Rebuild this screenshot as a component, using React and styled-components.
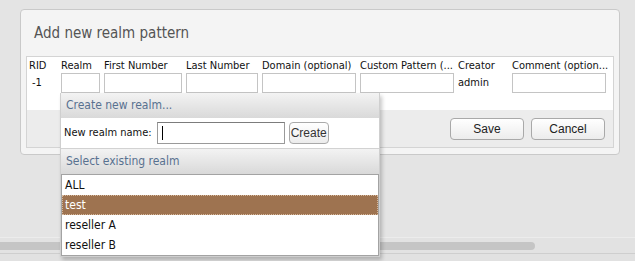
import React from "react";
import styled, { createGlobalStyle } from "styled-components";

const Global = createGlobalStyle`
  html, body {
    margin: 0;
    padding: 0;
    background: #e4e4e4;
    font-family: "DejaVu Sans Condensed", "DejaVu Sans", sans-serif;
    font-stretch: condensed;
    color: #111;
  }
`;

const Page = styled.div`
  height: 261px;
  display: flex;
  flex-direction: column;
  overflow: hidden;
`;

const Panel = styled.section`
  margin: 9px 0 0 20px;
  width: 588px;
  background: #f4f4f4;
  border: 1px solid #c9c9c9;
  border-radius: 4px;
  padding: 0 5px 6px 5px;
`;

const Title = styled.h2`
  margin: 0;
  height: 46px;
  padding-left: 8px;
  display: flex;
  align-items: center;
  font-size: 15px;
  font-weight: normal;
  color: #555;
`;

const Inner = styled.div`
  border: 1px solid #d4d4d4;
  background: #ececec;
`;

const Table = styled.div`
  background: #fff;
  display: grid;
  grid-template-columns: 32px 43px 82px 76px 98px 98px 54px 100px;
  padding: 2px 0 17px 0;
  font-size: 11px;
`;

const Cell = styled.div`
  position: relative;
  padding: 0 2px;
  height: ${(p) => (p.$head ? "14px" : "20px")};
  line-height: ${(p) => (p.$head ? "14px" : "20px")};
  padding-left: ${(p) => (p.$shift ? "5px" : "2px")};
  white-space: nowrap;
  overflow: ${(p) => (p.$open ? "visible" : "hidden")};
`;

const Field = styled.input`
  box-sizing: border-box;
  display: block;
  width: ${(p) => p.$w}px;
  height: 20px;
  border: 1px solid #c4c4c4;
  background: #fff;
  margin: 0;
  padding: 0 2px;
  outline: none;
`;

const Actions = styled.div`
  display: flex;
  justify-content: flex-end;
  gap: 7px;
  padding: 8px 8px 7px 0;
`;

const Button = styled.button`
  box-sizing: border-box;
  width: ${(p) => p.$w || 74}px;
  height: 22px;
  border: 1px solid #a9a9a9;
  border-radius: 4px;
  background: linear-gradient(#ffffff, #ececec);
  font-family: "Liberation Sans", Arial, sans-serif;
  font-size: 12px;
  color: #222;
  padding: 0;
`;

const Popup = styled.div`
  position: absolute;
  top: 20px;
  left: 1px;
  width: 318px;
  z-index: 5;
  background: #fff;
  border: 1px solid #cfcfcf;
  border-top: none;
  box-shadow: 2px 3px 4px rgba(0, 0, 0, 0.22);
  font-family: "DejaVu Sans Condensed", "DejaVu Sans", sans-serif;
`;

const PopHead = styled.div`
  height: ${(p) => p.$h}px;
  line-height: ${(p) => p.$h}px;
  padding-left: 5px;
  background: linear-gradient(#f3f3f3, #d9d9d9);
  border-top: ${(p) => (p.$line ? "1px solid #d2d2d2" : "none")};
  color: #587190;
  font-size: 12px;
`;

const NewRow = styled.div`
  height: 30px;
  display: flex;
  align-items: center;
  padding-left: 3px;
  font-size: 11px;
  color: #111;
`;

const NameBox = styled.div`
  position: relative;
  margin-left: 5px;
`;

const NameInput = styled.input`
  box-sizing: border-box;
  display: block;
  width: 128px;
  height: 22px;
  border: 1px solid #9a9a9a;
  border-top-color: #7c7c7c;
  padding: 0 4px;
  outline: none;
`;

const Caret = styled.span`
  position: absolute;
  left: 5px;
  top: 4px;
  width: 1px;
  height: 14px;
  background: #000;
`;

const CreateButton = styled(Button)`
  margin-left: 4px;
  width: 40px;
  border-radius: 4px;
  color: #333;
`;

const List = styled.ul`
  list-style: none;
  margin: 0;
  padding: 0;
  border: 1px solid #a3a3a3;
  background: #fff;
`;

const Item = styled.li`
  box-sizing: border-box;
  height: 20px;
  line-height: 20px;
  padding-left: 3px;
  font-size: 12px;
  color: ${(p) => (p.$sel ? "#fff" : "#111")};
  background: ${(p) => (p.$sel ? "#9e7350" : "transparent")};
  outline: ${(p) => (p.$sel ? "1px dotted #d6b89c" : "none")};
  outline-offset: -1px;
`;

const Track = styled.div`
  margin-top: auto;
  height: 15px;
  border-top: 1px solid #ececec;
  border-bottom: 1px solid #cecece;
  background: #e2e2e2;
  display: flex;
  align-items: center;
`;

const Thumb = styled.div`
  width: 535px;
  height: 8px;
  border-radius: 0 4px 4px 0;
  background: #c5c5c5;
`;

const Foot = styled.div`
  height: 7px;
  background: #e1e1e1;
`;

const heads = [
  "RID",
  "Realm",
  "First Number",
  "Last Number",
  "Domain (optional)",
  "Custom Pattern (...",
  "Creator",
  "Comment (option...",
];

const realms = ["ALL", "test", "reseller A", "reseller B"];

function RealmPicker() {
  return (
    <Popup>
      <PopHead $h={25}>Create new realm...</PopHead>
      <NewRow>
        New realm name:
        <NameBox>
          <NameInput />
          <Caret />
        </NameBox>
        <CreateButton>Create</CreateButton>
      </NewRow>
      <PopHead $h={25} $line>
        Select existing realm
      </PopHead>
      <List>
        {realms.map((r) => (
          <Item key={r} $sel={r === "test"}>
            {r}
          </Item>
        ))}
      </List>
    </Popup>
  );
}

export default function App() {
  return (
    <Page>
      <Global />
      <Panel>
        <Title>Add new realm pattern</Title>
        <Inner>
          <Table>
            {heads.map((h) => (
              <Cell key={h} $head>
                {h}
              </Cell>
            ))}
            <Cell $shift>-1</Cell>
            <Cell $open>
              <Field $w={39} />
              <RealmPicker />
            </Cell>
            <Cell>
              <Field $w={78} />
            </Cell>
            <Cell>
              <Field $w={72} />
            </Cell>
            <Cell>
              <Field $w={94} />
            </Cell>
            <Cell>
              <Field $w={94} />
            </Cell>
            <Cell>admin</Cell>
            <Cell>
              <Field $w={94} />
            </Cell>
          </Table>
          <Actions>
            <Button>Save</Button>
            <Button>Cancel</Button>
          </Actions>
        </Inner>
      </Panel>
      <Track>
        <Thumb />
      </Track>
      <Foot />
    </Page>
  );
}
